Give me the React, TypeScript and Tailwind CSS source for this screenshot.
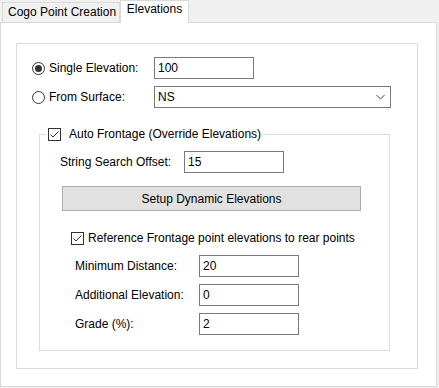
import React from 'react';

const Radio = ({ checked }: { checked?: boolean }) => (
  <span className="w-[13px] h-[13px] rounded-full border border-[#333333] bg-white flex items-center justify-center shrink-0">
    {checked && <span className="w-[7px] h-[7px] rounded-full bg-[#333333]" />}
  </span>
);

const Check = () => (
  <span className="w-[13px] h-[13px] border border-[#333333] bg-white flex items-center justify-center shrink-0">
    <svg width="11" height="11" viewBox="0 0 11 11">
      <path d="M1.5 5.5 L4 8 L9.5 2.5" fill="none" stroke="#333333" strokeWidth="1" />
    </svg>
  </span>
);

const Field = ({ value, width = 'w-[100px]' }: { value: string; width?: string }) => (
  <input
    type="text"
    defaultValue={value}
    className={`${width} h-[22px] border border-[#7a7a7a] bg-white px-[3px] text-[12px] text-black outline-none`}
  />
);

const Row = ({ label, value }: { label: string; value: string }) => (
  <div className="flex items-center h-[22px] pl-[35px]">
    <span className="w-[124px]">{label}</span>
    <Field value={value} />
  </div>
);

export default function App() {
  return (
    <div className="w-[439px] h-[388px] bg-[#f0f0f0] text-[12px] leading-[16px] text-black font-['Segoe_UI','Liberation_Sans',sans-serif]">
      {/* tabs */}
      <div className="flex items-end h-[22px]">
        <div className="ml-[2px] w-[118px] h-[20px] border border-b-0 border-[#d9d9d9] bg-[#f0f0f0] pl-[5px] pt-[1px] whitespace-nowrap">
          Cogo Point Creation
        </div>
        <div className="relative z-10 w-[69px] h-[23px] -mb-px border border-b-0 border-[#d9d9d9] bg-white text-center pt-0">
          Elevations
        </div>
      </div>

      {/* panel */}
      <div className="w-[437px] h-[365px] border border-[#d9d9d9] bg-white pt-[20px] pl-[15px]">
        <div className="w-[402px] h-[326px] border border-[#dcdcdc] pt-[13px] pl-[15px]">
          <div className="flex items-center h-[22px]">
            <div className="w-[122px] flex items-center gap-[4px]">
              <Radio checked />
              <span>Single Elevation:</span>
            </div>
            <Field value="100" />
          </div>
          <div className="flex items-center h-[22px] mt-[7px]">
            <div className="w-[122px] flex items-center gap-[4px]">
              <Radio />
              <span>From Surface:</span>
            </div>
            <div className="w-[237px] h-[22px] border border-[#7a7a7a] bg-white flex items-center justify-between pl-[3px] pr-[5px]">
              <span>NS</span>
              <svg width="9" height="6" viewBox="0 0 9 6">
                <path d="M0.5 1 L4.5 5 L8.5 1" fill="none" stroke="#444444" strokeWidth="1" />
              </svg>
            </div>
          </div>

          {/* auto frontage group */}
          <div className="relative mt-[26px] ml-[7px] w-[351px] h-[217px] border border-[#dcdcdc] pt-[16px]">
            <div className="absolute left-[6px] -top-[9px] bg-white px-[2px] flex items-center gap-[8px] h-[16px]">
              <Check />
              <span>Auto Frontage (Override Elevations)</span>
            </div>

            <div className="flex items-center h-[22px] pl-[20px]">
              <span className="w-[124px]">String Search Offset:</span>
              <Field value="15" />
            </div>

            <button
              type="button"
              className="mt-[13px] ml-[22px] w-[299px] h-[25px] border border-[#adadad] bg-[#e1e1e1] text-[12px] text-black"
            >
              Setup Dynamic Elevations
            </button>

            <div className="flex items-center gap-[4px] h-[16px] mt-[19px] ml-[31px]">
              <Check />
              <span>Reference Frontage point elevations to rear points</span>
            </div>

            <div className="mt-[9px] flex flex-col gap-[7px]">
              <Row label="Minimum Distance:" value="20" />
              <Row label="Additional Elevation:" value="0" />
              <Row label="Grade (%):" value="2" />
            </div>
          </div>
        </div>
      </div>
    </div>
  );
}
